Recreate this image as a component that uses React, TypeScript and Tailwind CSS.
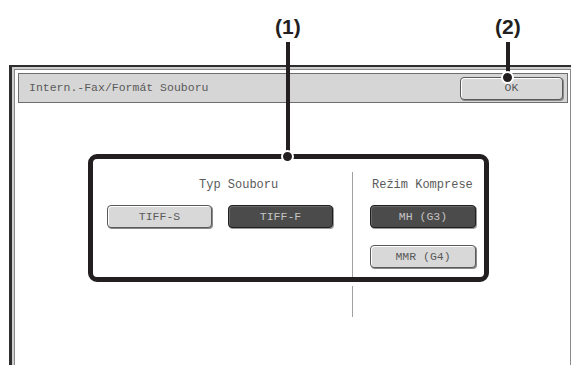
const mono = { fontFamily: '"Liberation Mono", "DejaVu Sans Mono", monospace' }

const Btn = ({ label, dark = false, w = 'w-[105px]' }: { label: string; dark?: boolean; w?: string }) => (
    <div
        className={`${w} h-[23px] rounded-[4px] border flex items-center justify-center text-[11.5px] ${
            dark
                ? 'bg-[#4b4b4b] border-[#1f1f1f] text-[#c4c4c4] shadow-[inset_1px_1px_0_#6a6a6a,1px_1px_0_#9a9a9a]'
                : 'bg-[#d8d8d8] border-[#5a5a5a] text-[#5a5a5a] shadow-[inset_1px_1px_0_#ffffff,1px_1px_0_#8a8a8a]'
        }`}
        style={mono}
    >
        {label}
    </div>
)

// callout label + leader line + dot, laid over the screen
const Callout = ({ n, x, bottom }: { n: string; x: string; bottom: string }) => (
    <div className={`absolute top-[15px] ${x} flex flex-col items-center`}>
        <span className="text-[21px] leading-[24px] font-bold text-[#231f20]" style={{ fontFamily: '"Liberation Sans", Arial, sans-serif' }}>
            {n}
        </span>
        <div className={`w-[4px] ${bottom} bg-[#231f20] mt-[3px]`} />
        <div className="w-[13px] h-[13px] -mt-[7px] rounded-full bg-[#231f20] border-[2px] border-white" />
    </div>
)

export default function App() {
    return (
        <div className="relative w-[571px] h-[365px] bg-white overflow-hidden">
            <div className="pt-[65px] pl-[9px] h-full">
                {/* outer frame */}
                <div className="h-[320px] border-t-[2px] border-l-[3px] border-[#2e2e2e] bg-[#cfcfcf] pt-[2px] pl-[2px]">
                    <div className="h-full border-t border-l border-r border-[#8a8a8a] bg-white pt-[3px] pl-[3px] pr-[2px]">
                        {/* title bar */}
                        <div className="h-[30px] bg-[#d6d6d6] border border-[#6e6e6e] flex items-center justify-between pl-[10px] pr-[4px]">
                            <span className="text-[11.5px] text-[#5a5a5a]" style={mono}>
                                Intern.-Fax/Formát Souboru
                            </span>
                            <Btn label="OK" w="w-[103px]" />
                        </div>

                        {/* settings box */}
                        <div className="ml-[70px] mt-[51px] w-[401px] h-[128px] border-[5px] border-[#231f20] rounded-[9px] flex">
                            <div className="w-[259px] pt-[19px] pl-[14px]">
                                <div className="pl-[92px] text-[12px] leading-[14px] text-[#5a5a5a]" style={mono}>
                                    Typ Souboru
                                </div>
                                <div className="flex gap-[16px] mt-[13px]">
                                    <Btn label="TIFF-S" />
                                    <Btn label="TIFF-F" dark />
                                </div>
                            </div>
                            <div className="flex-1 mt-[13px] border-l border-[#a0a0a0] pl-[17px]">
                                <div className="pt-[6px] pl-[2px] text-[12px] leading-[14px] text-[#5a5a5a]" style={mono}>
                                    Režim Komprese
                                </div>
                                <div className="flex flex-col gap-[17px] mt-[13px]">
                                    <Btn label="MH (G3)" dark w="w-[106px]" />
                                    <Btn label="MMR (G4)" w="w-[106px]" />
                                </div>
                            </div>
                        </div>
                        <div className="ml-[334px] mt-[4px] w-px h-[31px] bg-[#a0a0a0]" />
                    </div>
                </div>
            </div>

            <Callout n="(1)" x="left-[275px]" bottom="h-[115px]" />
            <Callout n="(2)" x="left-[495px]" bottom="h-[36px]" />
        </div>
    )
}
